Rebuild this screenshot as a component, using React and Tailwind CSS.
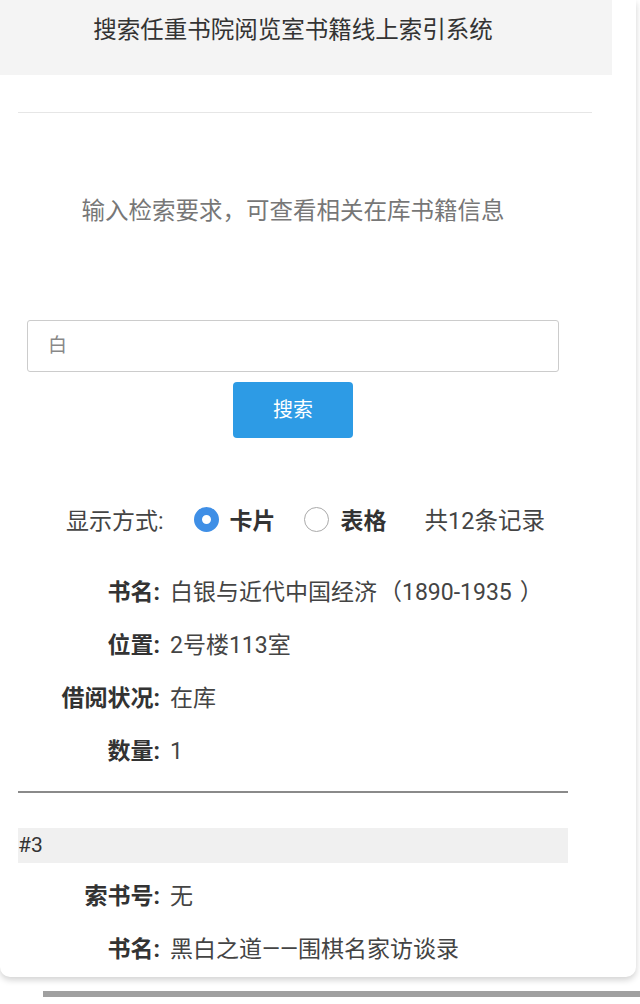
const fields = [
  {
    label: "书名:",
    value: (
      <>
        白银与近代中国经济<span className="ml-[2px]">（</span>1890-1935<span className="ml-[8px]">）</span>
      </>
    ),
  },
  { label: "位置:", value: "2号楼113室" },
  { label: "借阅状况:", value: "在库" },
  { label: "数量:", value: "1" },
];

const next = [
  { label: "索书号:", value: "无" },
  { label: "书名:", value: "黑白之道——围棋名家访谈录" },
];

function Field({ label, value }) {
  return (
    <div className="flex h-[53px] items-center text-[23px]">
      <div className="w-[142px] text-right font-bold text-[#333]">{label}</div>
      <div className="ml-[10px] text-[#444]">{value}</div>
    </div>
  );
}

function Radio({ checked }) {
  return checked ? (
    <span className="block h-[25px] w-[25px] rounded-full border-[8px] border-[#3f8fe6] bg-white" />
  ) : (
    <span className="block h-[25px] w-[25px] rounded-full border-[1.5px] border-[#aaa] bg-white" />
  );
}

export default function App() {
  return (
    <div
      className="h-[1004px] w-[640px] overflow-hidden bg-white"
      style={{ fontFamily: 'Roboto, "Noto Sans CJK SC", sans-serif' }}
    >
      <div className="w-[636px] rounded-b-[10px] bg-white shadow-[0_3px_6px_rgba(0,0,0,0.18)]">
        <div className="h-[75px] w-[612px] bg-[#f4f4f4] pr-[26px] pt-[15px] text-center text-[23.5px] leading-[30px] text-[#333]">
          搜索任重书院阅览室书籍线上索引系统
        </div>
        <div className="ml-[18px] mt-[37px] h-px w-[574px] bg-[#e6e6e6]" />

        <div className="ml-[18px] w-[550px]">
          <p className="mt-[82px] text-center text-[23.5px] leading-[32px] text-[#777]">
            输入检索要求，可查看相关在库书籍信息
          </p>

          <div className="ml-[9px] mt-[93px] flex h-[52px] w-[532px] items-center rounded-[3px] border border-[#ccc] pl-[20px] text-[19px] text-[#888]">
            白
          </div>
          <button className="mx-auto mt-[10px] block h-[56px] w-[120px] rounded-[4px] bg-[#2d9be5] text-[20px] text-white">
            搜索
          </button>

          <div className="ml-[48px] mt-[68px] flex h-[32px] items-center text-[23px]">
            <span className="text-[#444]">显示方式:</span>
            <span className="-mt-[5px] ml-[30px]"><Radio checked /></span>
            <span className="ml-[11px] font-bold text-[#333]">卡片</span>
            <span className="-mt-[5px] ml-[28px]"><Radio /></span>
            <span className="ml-[12px] font-bold text-[#333]">表格</span>
            <span className="ml-[38px] text-[23.5px] text-[#444]">共12条记录</span>
          </div>

          <div className="mt-[29px]">
            {fields.map((f) => (
              <Field key={f.label} {...f} />
            ))}
          </div>

          <div className="mt-[12px] h-[2px] bg-[#8a8a8a]" />

          <div className="mt-[35px] flex h-[35px] items-center bg-[#f0f0f0] text-[21px] text-[#333]">
            #3
          </div>

          <div className="mt-[8px]">
            {next.map((f) => (
              <Field key={f.label} {...f} />
            ))}
          </div>
        </div>
      </div>
      <div className="ml-[43px] mt-[14px] h-[6px] bg-[#a0a0a0]" />
    </div>
  );
}
